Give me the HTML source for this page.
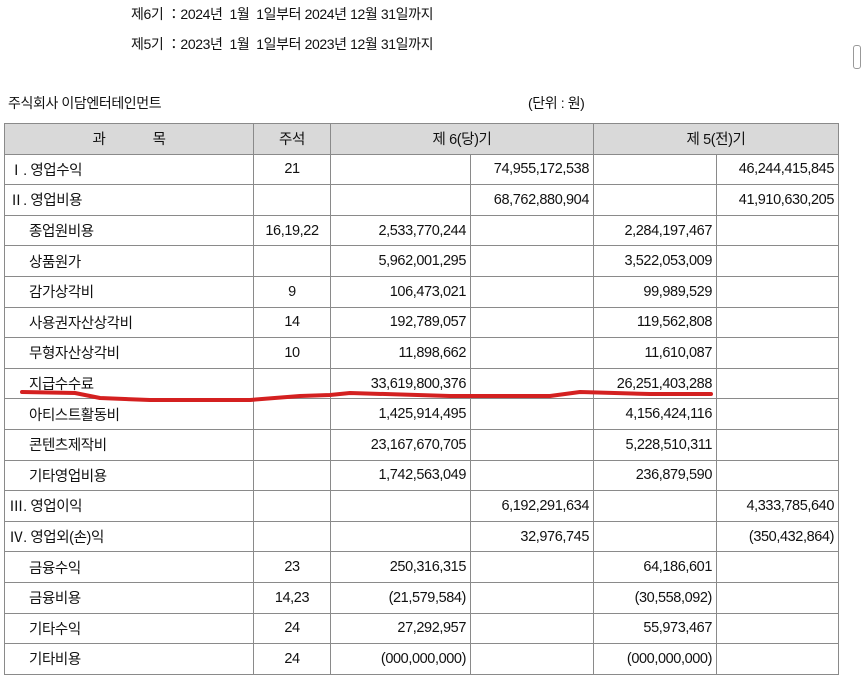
<!DOCTYPE html>
<html><head><meta charset="utf-8"><style>
body{margin:0;width:861px;height:652px;overflow:hidden;background:#fff;font-family:"Liberation Sans","Noto Sans CJK KR","NanumGothic",sans-serif;color:#111;position:relative}
.t{position:absolute;font-size:14px;letter-spacing:-0.4px;white-space:nowrap}
table{position:absolute;left:4px;top:123px;border-collapse:collapse;table-layout:fixed;font-size:14.5px;letter-spacing:-0.4px}
td{border:1px solid #8a8a8a;height:30.6px;padding:0 4px;white-space:nowrap;box-sizing:border-box}
tr.h td{background:#d9d9d9;text-align:center}
.c{text-align:center}.r{text-align:right}.i{padding-left:24px}
</style></head><body>
<div class="t" style="left:131px;top:4px">제6기 ：2024년 &nbsp;1월 &nbsp;1일부터 2024년 12월 31일까지</div>
<div class="t" style="left:131px;top:34px">제5기 ：2023년 &nbsp;1월 &nbsp;1일부터 2023년 12월 31일까지</div>
<div class="t" style="left:8px;top:93px">주식회사 이담엔터테인먼트</div>
<div class="t" style="left:528px;top:93px">(단위 : 원)</div>
<div style="position:absolute;left:853px;top:45px;width:6px;height:22px;border:1px solid #999;border-radius:3px"></div>
<table>
<colgroup><col style="width:249px"><col style="width:77px"><col style="width:140px"><col style="width:123px"><col style="width:123px"><col style="width:122px"></colgroup>
<tr class="h"><td>과 &nbsp; &nbsp; &nbsp; &nbsp; &nbsp; &nbsp; 목</td><td>주석</td><td colspan="2">제 6(당)기</td><td colspan="2">제 5(전)기</td></tr>
<tr><td>Ⅰ. 영업수익</td><td class="c">21</td><td></td><td class="r">74,955,172,538</td><td></td><td class="r">46,244,415,845</td></tr>
<tr><td>Ⅱ. 영업비용</td><td></td><td></td><td class="r">68,762,880,904</td><td></td><td class="r">41,910,630,205</td></tr>
<tr><td class="i">종업원비용</td><td class="c">16,19,22</td><td class="r">2,533,770,244</td><td></td><td class="r">2,284,197,467</td><td></td></tr>
<tr><td class="i">상품원가</td><td></td><td class="r">5,962,001,295</td><td></td><td class="r">3,522,053,009</td><td></td></tr>
<tr><td class="i">감가상각비</td><td class="c">9</td><td class="r">106,473,021</td><td></td><td class="r">99,989,529</td><td></td></tr>
<tr><td class="i">사용권자산상각비</td><td class="c">14</td><td class="r">192,789,057</td><td></td><td class="r">119,562,808</td><td></td></tr>
<tr><td class="i">무형자산상각비</td><td class="c">10</td><td class="r">11,898,662</td><td></td><td class="r">11,610,087</td><td></td></tr>
<tr><td class="i">지급수수료</td><td></td><td class="r">33,619,800,376</td><td></td><td class="r">26,251,403,288</td><td></td></tr>
<tr><td class="i">아티스트활동비</td><td></td><td class="r">1,425,914,495</td><td></td><td class="r">4,156,424,116</td><td></td></tr>
<tr><td class="i">콘텐츠제작비</td><td></td><td class="r">23,167,670,705</td><td></td><td class="r">5,228,510,311</td><td></td></tr>
<tr><td class="i">기타영업비용</td><td></td><td class="r">1,742,563,049</td><td></td><td class="r">236,879,590</td><td></td></tr>
<tr><td>Ⅲ. 영업이익</td><td></td><td></td><td class="r">6,192,291,634</td><td></td><td class="r">4,333,785,640</td></tr>
<tr><td>Ⅳ. 영업외(손)익</td><td></td><td></td><td class="r">32,976,745</td><td></td><td class="r">(350,432,864)</td></tr>
<tr><td class="i">금융수익</td><td class="c">23</td><td class="r">250,316,315</td><td></td><td class="r">64,186,601</td><td></td></tr>
<tr><td class="i">금융비용</td><td class="c">14,23</td><td class="r">(21,579,584)</td><td></td><td class="r">(30,558,092)</td><td></td></tr>
<tr><td class="i">기타수익</td><td class="c">24</td><td class="r">27,292,957</td><td></td><td class="r">55,973,467</td><td></td></tr>
<tr><td class="i">기타비용</td><td class="c">24</td><td class="r">(000,000,000)</td><td></td><td class="r">(000,000,000)</td><td></td></tr>
</table>
<svg style="position:absolute;left:0;top:0" width="861" height="652"><path d="M22 392 L75 393 L100 398 L150 400 L250 400 L300 396 L330 395 L350 393 L450 396 L550 396 L580 392 L650 394 L711 394" fill="none" stroke="#d42020" stroke-width="4" stroke-linecap="round" stroke-linejoin="round"/></svg>
</body></html>
